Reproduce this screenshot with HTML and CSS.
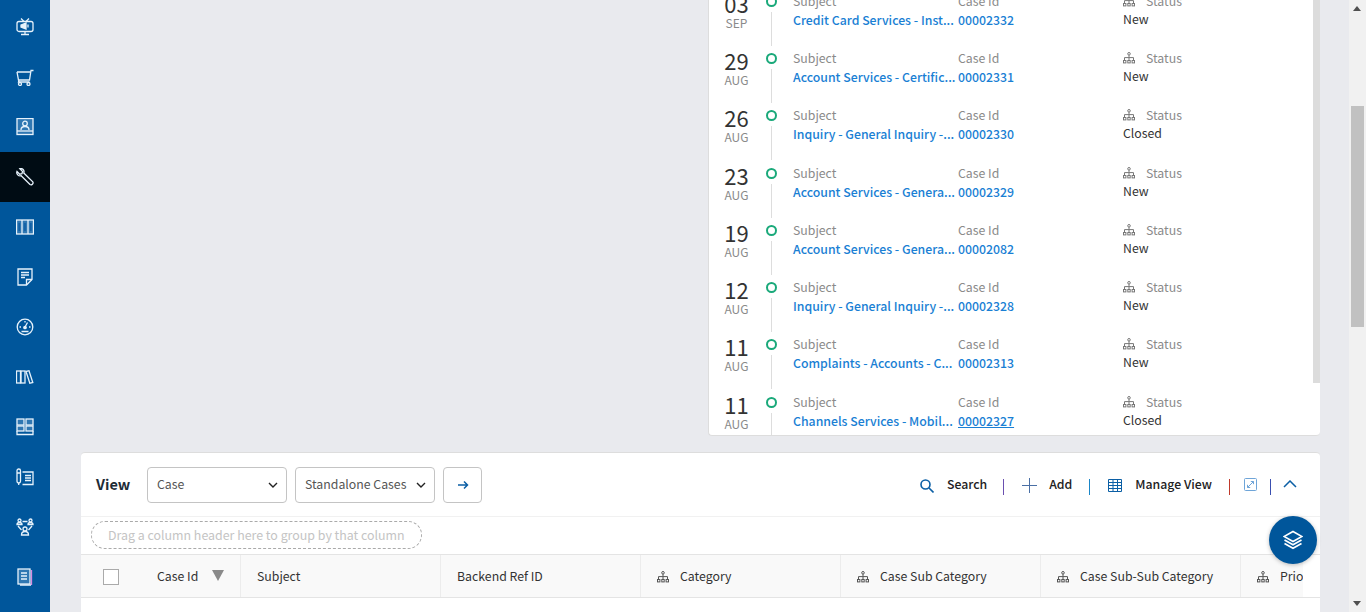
FILE: index.html
```html
<!DOCTYPE html>
<html lang="en">
<head>
    <meta charset="UTF-8">
    <title>Cases</title>
    <link rel="stylesheet" href="styles.css">
</head>
<body>
    <svg class="defs" width="0" height="0">
        <symbol id="org" viewBox="0 0 12 12">
            <circle cx="6" cy="1.8" r="1.3"/>
            <path d="M6 3.1V8M1.5 8V5.6H10.5V8"/>
            <rect x="0.5" y="8.5" width="2.4" height="2.4"/>
            <rect x="4.8" y="8.5" width="2.4" height="2.4"/>
            <rect x="9.1" y="8.5" width="2.4" height="2.4"/>
        </symbol>
    </svg>

    <nav class="sidebar">
        <a class="nav-item">
            <svg viewBox="0 0 18 18"><path d="M5 0.500l3 3M13 0.500l-3 3"/><rect x="1" y="3.500" width="16" height="10" rx="2"/><path d="M5 16.500h8M9 13.500v3"/><path class="fill" d="M5 7l5-2v6L5 9z"/><path d="M12 6.500v3"/></svg>
        </a>
        <a class="nav-item">
            <svg viewBox="0 0 18 18"><path d="M1 4l1.500 8h11L15 2.500h2.500"/><path d="M1 4h13.700M3 12l-.5 2h11"/><circle cx="4" cy="16" r="1.500"/><circle cx="12.500" cy="16" r="1.500"/></svg>
        </a>
        <a class="nav-item">
            <svg viewBox="0 0 18 18"><rect class="fill-soft" x="1" y="0.500" width="16" height="16"/><path d="M1 13h16"/><circle cx="9" cy="5.500" r="2.300"/><path d="M5 12c0-3 1.500-3.500 4-3.500s4 .5 4 3.500"/></svg>
        </a>
        <a class="nav-item active">
            <svg viewBox="0 0 18 18"><path d="M1 3.500l2.700 2.700 2.300-.5.500-2.300L3.800.7C6.500-.3 8.700 2.500 7.800 5l9 8.800c1 1.700-1.200 3.700-2.800 2.700L5.200 7.700C2.500 8.500 0 6 1 3.500z"/></svg>
        </a>
        <a class="nav-item">
            <svg viewBox="0 0 18 18"><rect class="fill-soft" x="0.500" y="2" width="17" height="14"/><path d="M6 2v14M12 2v14"/><path class="accent" d="M3.200 5v8M9 5v8M14.800 5v8"/></svg>
        </a>
        <a class="nav-item">
            <svg viewBox="0 0 18 18"><path d="M2 1h14v10.500L10.500 17H2z"/><path d="M10.500 17v-5.500H16"/><path d="M5 4.500h8M5 7h8M5 9.500h4"/></svg>
        </a>
        <a class="nav-item">
            <svg viewBox="0 0 18 18"><circle cx="9" cy="9" r="7.800"/><path d="M9 9l2.500-4.500M3.500 9H5M13 9h1.500M9 3v1.500M5.500 13.500h7"/><circle class="fill" cx="9" cy="9.500" r="1.200"/></svg>
        </a>
        <a class="nav-item">
            <svg viewBox="0 0 18 18"><rect x="0.500" y="3" width="4" height="12"/><rect x="5" y="3" width="4" height="12"/><path d="M10 3.500l3-.8L16.800 14.500l-3 .8z"/></svg>
        </a>
        <a class="nav-item">
            <svg viewBox="0 0 18 18"><rect class="fill-soft" x="1" y="1" width="7" height="6"/><rect class="fill-soft" x="10" y="1" width="7" height="6"/><rect class="fill-soft" x="1" y="8" width="7" height="5"/><rect class="fill-soft" x="10" y="8" width="7" height="5"/><path d="M1 13v3.500h16V13"/></svg>
        </a>
        <a class="nav-item">
            <svg viewBox="0 0 18 18"><rect x="1" y="1" width="3.500" height="14" rx="1.700"/><path d="M1 5h3.500M2.700 15v2"/><path d="M6.500 4H17v12.500H6.500"/><path d="M9 7.500h6M9 10h6M9 12.500h6"/></svg>
        </a>
        <a class="nav-item">
            <svg viewBox="0 0 18 18"><circle cx="3.500" cy="2.500" r="1.500"/><circle cx="14.500" cy="2.500" r="1.500"/><path d="M1 6.500c0-1.500 1-2 2.500-2S6 5 6 6.500zM12 6.500c0-1.500 1-2 2.500-2s2.500.5 2.500 2zM6.500 3.500h5M2 8l3.500 4M16 8l-3.500 4"/><circle cx="9" cy="11" r="2"/><path d="M5.500 17c0-2.500 1-3.500 3.500-3.500s3.500 1 3.500 3.500z"/></svg>
        </a>
        <a class="nav-item">
            <svg viewBox="0 0 18 18"><rect class="fill-soft" x="2" y="1" width="12" height="15"/><path d="M5 5h6M5 8h6M5 11h6M4 17h11"/><path class="edge" d="M15.500 2v15"/></svg>
        </a>
    </nav>

    <main class="content">
        <section class="timeline-card">
            <div class="timeline-list">
                <div class="case-row">
                    <div class="case-date"><span class="day">03</span><span class="month">SEP</span></div>
                    <div class="case-marker"><i class="dot"></i><i class="line"></i></div>
                    <div class="case-subject"><span class="label">Subject</span><a>Credit Card Services - Inst...</a></div>
                    <div class="case-id"><span class="label">Case Id</span><a>00002332</a></div>
                    <div class="case-status"><span class="label"><svg class="org"><use href="#org"/></svg>Status</span><span class="value">New</span></div>
                </div>
                <div class="case-row">
                    <div class="case-date"><span class="day">29</span><span class="month">AUG</span></div>
                    <div class="case-marker"><i class="dot"></i><i class="line"></i></div>
                    <div class="case-subject"><span class="label">Subject</span><a>Account Services - Certific...</a></div>
                    <div class="case-id"><span class="label">Case Id</span><a>00002331</a></div>
                    <div class="case-status"><span class="label"><svg class="org"><use href="#org"/></svg>Status</span><span class="value">New</span></div>
                </div>
                <div class="case-row">
                    <div class="case-date"><span class="day">26</span><span class="month">AUG</span></div>
                    <div class="case-marker"><i class="dot"></i><i class="line"></i></div>
                    <div class="case-subject"><span class="label">Subject</span><a>Inquiry - General Inquiry -...</a></div>
                    <div class="case-id"><span class="label">Case Id</span><a>00002330</a></div>
                    <div class="case-status"><span class="label"><svg class="org"><use href="#org"/></svg>Status</span><span class="value">Closed</span></div>
                </div>
                <div class="case-row">
                    <div class="case-date"><span class="day">23</span><span class="month">AUG</span></div>
                    <div class="case-marker"><i class="dot"></i><i class="line"></i></div>
                    <div class="case-subject"><span class="label">Subject</span><a>Account Services - Genera...</a></div>
                    <div class="case-id"><span class="label">Case Id</span><a>00002329</a></div>
                    <div class="case-status"><span class="label"><svg class="org"><use href="#org"/></svg>Status</span><span class="value">New</span></div>
                </div>
                <div class="case-row">
                    <div class="case-date"><span class="day">19</span><span class="month">AUG</span></div>
                    <div class="case-marker"><i class="dot"></i><i class="line"></i></div>
                    <div class="case-subject"><span class="label">Subject</span><a>Account Services - Genera...</a></div>
                    <div class="case-id"><span class="label">Case Id</span><a>00002082</a></div>
                    <div class="case-status"><span class="label"><svg class="org"><use href="#org"/></svg>Status</span><span class="value">New</span></div>
                </div>
                <div class="case-row">
                    <div class="case-date"><span class="day">12</span><span class="month">AUG</span></div>
                    <div class="case-marker"><i class="dot"></i><i class="line"></i></div>
                    <div class="case-subject"><span class="label">Subject</span><a>Inquiry - General Inquiry -...</a></div>
                    <div class="case-id"><span class="label">Case Id</span><a>00002328</a></div>
                    <div class="case-status"><span class="label"><svg class="org"><use href="#org"/></svg>Status</span><span class="value">New</span></div>
                </div>
                <div class="case-row">
                    <div class="case-date"><span class="day">11</span><span class="month">AUG</span></div>
                    <div class="case-marker"><i class="dot"></i><i class="line"></i></div>
                    <div class="case-subject"><span class="label">Subject</span><a>Complaints - Accounts - C...</a></div>
                    <div class="case-id"><span class="label">Case Id</span><a>00002313</a></div>
                    <div class="case-status"><span class="label"><svg class="org"><use href="#org"/></svg>Status</span><span class="value">New</span></div>
                </div>
                <div class="case-row">
                    <div class="case-date"><span class="day">11</span><span class="month">AUG</span></div>
                    <div class="case-marker"><i class="dot"></i><i class="line"></i></div>
                    <div class="case-subject"><span class="label">Subject</span><a>Channels Services - Mobil...</a></div>
                    <div class="case-id"><span class="label">Case Id</span><a class="hovered">00002327</a></div>
                    <div class="case-status"><span class="label"><svg class="org"><use href="#org"/></svg>Status</span><span class="value">Closed</span></div>
                </div>
            </div>
            <div class="card-scroll"></div>
        </section>

        <section class="view-panel">
            <div class="view-toolbar">
                <span class="view-title">View</span>
                <div class="select">Case<svg viewBox="0 0 10 6"><path d="M1 1l4 4 4-4"/></svg></div>
                <div class="select">Standalone Cases<svg viewBox="0 0 10 6"><path d="M1 1l4 4 4-4"/></svg></div>
                <button class="go-btn"><svg viewBox="0 0 12 10"><path d="M1 5h9.500M7 1.500L10.500 5 7 8.500"/></svg></button>
                <div class="actions">
                    <a class="action"><svg class="icon-search" viewBox="0 0 14 14"><circle cx="5.500" cy="5.500" r="4.500"/><path d="M9 9l4.500 4.500"/></svg>Search</a>
                    <i class="sep sep-purple"></i>
                    <a class="action"><svg class="icon-plus" viewBox="0 0 15 15"><path d="M7.500 0v15M0 7.500h15"/></svg>Add</a>
                    <i class="sep sep-blue"></i>
                    <a class="action"><svg class="icon-table" viewBox="0 0 14 13"><path d="M.5.500h13v12H.5zM.5 3.500h13M.5 6.500h13M.5 9.500h13M5 .5v12M9.500.5v12"/></svg>Manage View</a>
                    <i class="sep sep-red"></i>
                    <svg class="icon-expand" viewBox="0 0 13 13"><rect x=".5" y=".5" width="12" height="12" rx="1"/><path d="M3.500 9.500l6-6M6.800 3.500h2.700v2.700M3.500 6.800v2.700h2.700"/></svg>
                    <i class="sep sep-indigo"></i>
                    <svg class="icon-chevron" viewBox="0 0 14 8"><path d="M1 7l6-6 6 6"/></svg>
                </div>
            </div>
            <div class="group-bar">
                <div class="group-drop">Drag a column header here to group by that column</div>
            </div>
            <div class="grid-head">
                <div class="col col-select"><i class="checkbox"></i><span>Case Id</span><i class="sort"></i></div>
                <div class="col">Subject</div>
                <div class="col">Backend Ref ID</div>
                <div class="col"><svg class="org"><use href="#org"/></svg>Category</div>
                <div class="col"><svg class="org"><use href="#org"/></svg>Case Sub Category</div>
                <div class="col"><svg class="org"><use href="#org"/></svg>Case Sub-Sub Category</div>
                <div class="col col-clip"><svg class="org"><use href="#org"/></svg>Priority</div>
            </div>
            <button class="fab">
                <svg viewBox="0 0 20 20"><path class="fab-top" d="M10 1.500L19 6.500 10 11.500 1 6.500z"/><path d="M1.500 10L10 14.800 18.500 10M1.500 13.500L10 18.300 18.500 13.500"/></svg>
            </button>
        </section>
    </main>

    <div class="page-scroll">
        <i class="arrow-up"></i>
        <div class="page-thumb"></div>
        <i class="arrow-down"></i>
    </div>
</body>
</html>
```

FILE: styles.css
```css
* {
    box-sizing: border-box;
}

html,
body {
    height: 612px;
    margin: 0;
    overflow: hidden;
}

body {
    display: flex;
    font-family: "Noto Sans CJK SC", "Noto Sans", sans-serif;
    font-size: 12.3px;
    color: #333;
    background-color: #e9eaee;
}

.defs {
    position: absolute;
}

/* Barra lateral */
.sidebar {
    flex: 0 0 50px;
    padding-top: 2px;
    background-color: #00569b;
}

.nav-item {
    display: flex;
    align-items: center;
    justify-content: center;
    height: 50px;
}

.nav-item.active {
    background-color: #000c14;
}

.nav-item svg {
    width: 18px;
    height: 18px;
    fill: none;
    stroke: #e6f2fb;
    stroke-width: 1.3;
}

.nav-item .fill {
    fill: #e6f2fb;
}

.nav-item .fill-soft {
    fill: #2f77b2;
}

.nav-item .accent {
    stroke: #0f5fa6;
    stroke-width: 1.6;
}

.nav-item .edge {
    stroke: #d68be0;
}

/* Contenido */
.content {
    flex: 1;
    min-width: 0;
    position: relative;
}

.timeline-card {
    display: flex;
    height: 436px;
    margin-left: 658px;
    margin-right: 29px;
    overflow: hidden;
    background-color: #fff;
    border-left: 1px solid #ddd;
    border-bottom: 1px solid #ddd;
    border-radius: 0 0 4px 4px;
}

.timeline-list {
    flex: 1;
    min-width: 0;
    margin-top: -7.25px;
}

.case-row {
    display: flex;
    height: 57.25px;
}

.case-date {
    display: flex;
    flex-direction: column;
    align-items: center;
    flex: 0 0 55px;
}

.day {
    font-size: 22px;
    line-height: 22px;
    margin-top: -1px;
    color: #333;
}

.month {
    font-size: 12px;
    line-height: 16px;
    margin-top: 1px;
    color: #8a8a8a;
}

.case-marker {
    display: flex;
    flex-direction: column;
    align-items: center;
    flex: 0 0 15px;
    margin-right: 14px;
}

.dot {
    flex: none;
    width: 11px;
    height: 11px;
    margin-top: 3px;
    border: 2.5px solid #1aa97a;
    border-radius: 50%;
}

.line {
    width: 1px;
    height: 34px;
    margin-top: 5px;
    background-color: #ddd;
}

.case-subject,
.case-id {
    flex: 0 0 165px;
    min-width: 0;
}

.case-subject,
.case-id,
.case-status {
    display: flex;
    flex-direction: column;
    margin-top: -1px;
    white-space: nowrap;
}

.label {
    display: flex;
    align-items: center;
    height: 18px;
    color: #8a8a8a;
}

.case-row a {
    margin-top: 1px;
    line-height: 19px;
    font-size: 12.3px;
    font-weight: 500;
    color: #1a7fd4;
}

.case-row a.hovered {
    align-self: flex-start;
    text-decoration: underline;
}

.value {
    line-height: 18px;
    color: #333;
}

.org {
    width: 12px;
    height: 12px;
    flex: none;
    fill: none;
    stroke: #777;
    stroke-width: 1;
}

.case-status .org {
    margin-right: 11px;
}

.card-scroll {
    flex: 0 0 7px;
    height: 383px;
    background-color: #dcdcdc;
}

/* Panel de vista */
.view-panel {
    position: relative;
    height: 160px;
    margin: 16px 29px 0 31px;
    background-color: #fff;
    border-top: 1px solid #ddd;
    border-radius: 4px 4px 0 0;
}

.view-toolbar {
    display: flex;
    align-items: center;
    height: 64px;
    padding: 0 23px 0 15px;
    border-bottom: 1px solid #f1f1f1;
}

.view-title {
    flex: 0 0 51px;
    padding-bottom: 2px;
    font-size: 14.5px;
    font-weight: 700;
    color: #1d2b36;
}

.select {
    display: flex;
    align-items: center;
    justify-content: space-between;
    width: 140px;
    height: 36px;
    margin-right: 8px;
    padding: 0 8px 2px 9px;
    white-space: nowrap;
    color: #555;
    border: 1px solid #c4c4c4;
    border-radius: 4px;
}

.select svg {
    width: 10px;
    height: 6px;
    margin-top: 2px;
    fill: none;
    stroke: #222;
    stroke-width: 1.4;
}

.go-btn {
    display: flex;
    align-items: center;
    justify-content: center;
    width: 39px;
    height: 36px;
    padding: 0;
    background: #fff;
    border: 1px solid #c4c4c4;
    border-radius: 4px;
}

.go-btn svg {
    width: 12px;
    height: 10px;
    fill: none;
    stroke: #0b5fa5;
    stroke-width: 1.5;
}

.actions {
    display: flex;
    align-items: center;
    margin-left: auto;
}

.action {
    display: flex;
    align-items: center;
    padding-bottom: 2px;
    color: #222;
    font-weight: 500;
}

.action svg {
    margin: 4px 13px 0 0;
    fill: none;
}

.action .icon-plus {
    margin-right: 12px;
}

.icon-search {
    width: 14px;
    height: 14px;
    stroke: #0b5fa5;
    stroke-width: 1.6;
}

.icon-plus {
    width: 15px;
    height: 15px;
    stroke: #4a6fa5;
    stroke-width: 1;
}

.icon-table {
    width: 14px;
    height: 13px;
    stroke: #0b5fa5;
    stroke-width: 1;
}

.icon-expand {
    width: 13px;
    height: 13px;
    fill: none;
    stroke: #6fa5d8;
    stroke-width: 1;
}

.icon-chevron {
    width: 14px;
    height: 8px;
    margin-bottom: 2px;
    fill: none;
    stroke: #0b5fa5;
    stroke-width: 1.5;
}

.sep {
    width: 1px;
    height: 16px;
    margin: 4px 18px 0 17px;
}

.sep-purple {
    margin-left: 16px;
    background-color: #6a4fb0;
}

.sep-blue {
    background-color: #1a86c8;
}

.sep-red {
    margin-right: 14px;
    background-color: #c0392b;
}

.sep-indigo {
    margin: 4px 12px 0 13px;
    background-color: #3a4fb0;
}

.group-bar {
    height: 38px;
    padding: 4px 0 0 10px;
    border-bottom: 1px solid #e4e4e4;
}

.group-drop {
    width: 331px;
    height: 28px;
    padding-left: 16px;
    line-height: 26px;
    font-size: 12.4px;
    white-space: nowrap;
    color: #c4c4c4;
    border: 1px dashed #aaa;
    border-radius: 14px;
}

.grid-head {
    display: flex;
    width: 1222px;
    height: 42px;
    overflow: hidden;
    background-color: #f9f9f9;
    color: #333;
}

.view-panel::after {
    content: "";
    display: block;
    height: 1px;
    background-color: #e4e4e4;
}

.col {
    display: flex;
    flex: 0 0 200px;
    align-items: center;
    padding-left: 16px;
    white-space: nowrap;
    border-right: 1px solid #ececec;
}

.col .org {
    margin: 1px 11px 0 0;
    stroke: #555;
}

.col-select {
    flex-basis: 160px;
    padding-left: 22px;
}

.col-clip {
    flex-basis: 62px;
    overflow: hidden;
    border-right: 0;
}

.checkbox {
    flex: none;
    width: 16px;
    height: 16px;
    margin: 2px 38px 0 0;
    background-color: #fff;
    border: 1px solid #aaa;
}

.sort {
    margin: -1px 0 0 14px;
    border-left: 6.5px solid transparent;
    border-right: 6.5px solid transparent;
    border-top: 11px solid #8a8a8a;
}

.fab {
    position: absolute;
    top: 63px;
    right: 3px;
    display: flex;
    align-items: center;
    justify-content: center;
    width: 48px;
    height: 48px;
    padding: 0;
    background-color: #00569b;
    border: none;
    border-radius: 50%;
    box-shadow: 0 1px 4px rgba(0, 0, 0, 0.25);
}

.fab svg {
    width: 20px;
    height: 20px;
    fill: none;
    stroke: #fff;
    stroke-width: 1.6;
}

/* Barra de desplazamiento de la pagina */
.page-scroll {
    position: relative;
    flex: 0 0 17px;
    padding: 106px 2px 0;
    background-color: #f1f1f1;
}

.page-thumb {
    height: 221px;
    background-color: #c1c1c1;
}

.arrow-up,
.arrow-down {
    position: absolute;
    left: 4px;
    border-left: 4px solid transparent;
    border-right: 4px solid transparent;
}

.arrow-up {
    top: 6px;
    border-bottom: 5px solid #505050;
}

.arrow-down {
    bottom: 6px;
    border-top: 5px solid #505050;
}
```
